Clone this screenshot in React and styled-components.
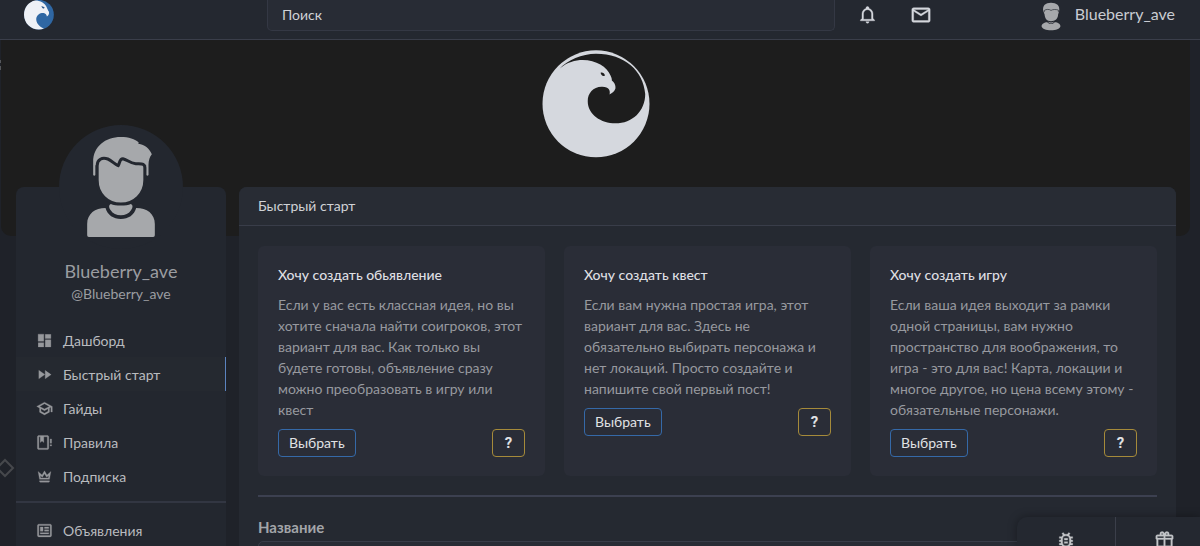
import styled, { createGlobalStyle, css } from 'styled-components';

const GlobalStyle = createGlobalStyle`
    * {
        box-sizing: border-box;
    }

    body {
        margin: 0;
        background-color: #1f2229;
        color: #d5d8de;
        font-family: Lato, 'Open Sans', sans-serif;
        font-size: 14px;
    }

    button, input {
        font: inherit;
        color: inherit;
    }
`

const icons = {
    bell: 'M10 21H14C14 22.1 13.1 23 12 23S10 22.1 10 21M21 19V20H3V19L5 17V11C5 7.9 7 5.2 10 4.3V4C10 2.9 10.9 2 12 2S14 2.9 14 4V4.3C17 5.2 19 7.9 19 11V17L21 19M17 11C17 8.2 14.8 6 12 6S7 8.2 7 11V18H17V11Z',
    mail: 'M22 6C22 4.9 21.1 4 20 4H4C2.9 4 2 4.9 2 6V18C2 19.1 2.9 20 4 20H20C21.1 20 22 19.1 22 18V6M20 6L12 11L4 6H20M20 18H4V8L12 13L20 8V18Z',
    dashboard: 'M13 3V9H21V3M13 21H21V11H13M3 21H11V15H3M3 13H11V3H3V13Z',
    forward: 'M13 6V18L21.5 12M4 18L12.5 12L4 6V18Z',
    school: 'M12 3L1 9L5 11.18V17.18L12 21L19 17.18V11.18L21 10.09V17H23V9L12 3M18.82 9L12 12.72L5.18 9L12 5.28L18.82 9M17 16L12 18.72L7 16V12.27L12 15L17 12.27V16Z',
    rules: 'M16 2H4C2.9 2 2 2.9 2 4V20C2 21.11 2.9 22 4 22H16C17.11 22 18 21.11 18 20V4C18 2.9 17.11 2 16 2M16 20H4V4H6V12L8.5 9.75L11 12V4H16V20M20 15H22V17H20V15M22 7V13H20V7H22Z',
    crown: 'M12 8L15 13.2L18 10.5L17.3 14H6.7L6 10.5L9 13.2L12 8M12 4L8.5 10L3 5L5 16H19L21 5L15.5 10L12 4M19 18H5V19C5 19.6 5.4 20 6 20H18C18.6 20 19 19.6 19 19V18Z',
    news: 'M20 5L20 19L4 19L4 5H20M20 3H4C2.89 3 2 3.89 2 5V19C2 20.11 2.89 21 4 21H20C21.11 21 22 20.11 22 19V5C22 3.89 21.11 3 20 3M18 15H6V17H18V15M10 7H6V13H10V7M12 9H18V7H12V9M18 11H12V13H18V11Z',
    bug: 'M20,8H17.19C16.74,7.2 16.12,6.5 15.37,6L17,4.41L15.59,3L13.42,5.17C12.96,5.06 12.49,5 12,5C11.51,5 11.04,5.06 10.59,5.17L8.41,3L7,4.41L8.62,6C7.87,6.5 7.26,7.21 6.81,8H4V10H6.09C6.03,10.33 6,10.66 6,11V12H4V14H6V15C6,15.34 6.03,15.67 6.09,16H4V18H6.81C8.47,20.87 12.14,21.84 15,20.18C15.91,19.66 16.67,18.9 17.19,18H20V16H17.91C17.97,15.67 18,15.34 18,15V14H20V12H18V11C18,10.66 17.97,10.33 17.91,10H20V8M16,15A4,4 0 0,1 12,19A4,4 0 0,1 8,15V11A4,4 0 0,1 12,7A4,4 0 0,1 16,11V15M14,10V12H10V10H14M10,14H14V16H10V14Z',
    gift: 'M22,12V20A2,2 0 0,1 20,22H4A2,2 0 0,1 2,20V12A1,1 0 0,1 1,11V8A2,2 0 0,1 3,6H6.17C6.06,5.69 6,5.35 6,5A3,3 0 0,1 9,2C10,2 10.88,2.5 11.43,3.24V3.23L12,4L12.57,3.23V3.24C13.12,2.5 14,2 15,2A3,3 0 0,1 18,5C18,5.35 17.94,5.69 17.83,6H21A2,2 0 0,1 23,8V11A1,1 0 0,1 22,12M4,20H11V12H4V20M20,20V12H13V20H20M9,4A1,1 0 0,0 8,5A1,1 0 0,0 9,6A1,1 0 0,0 10,5A1,1 0 0,0 9,4M15,4A1,1 0 0,0 14,5A1,1 0 0,0 15,6A1,1 0 0,0 16,5A1,1 0 0,0 15,4M3,8V10H11V8H3M13,8V10H21V8H13Z',
};

const Icon = ({ name, size = 17 }) => (
    <svg width={size} height={size} viewBox="0 0 24 24" fill="currentColor" stroke="currentColor" strokeWidth="0.4" aria-hidden="true">
        <path d={icons[name]} />
    </svg>
)

const Page = styled.div`
    position: relative;
    height: 100vh;
    overflow: hidden;
`

const Header = styled.header`
    display: grid;
    grid-template-columns: 243px minmax(0, 568px) 1fr auto;
    grid-template-rows: 29px;
    height: 40px;
    padding: 0 25px 0 24px;
    background-color: #242830;
    border-bottom: 1px solid #3a3e4a;
`

const LogoLink = styled.a`
    width: 30px;
    height: 30px;

    svg {
        display: block;
    }
`

const Search = styled.input`
    width: 100%;
    height: 31px;
    padding: 0 14px 2px;
    border: 1px solid #343844;
    border-top: none;
    border-radius: 0 0 5px 5px;
    outline: none;
    background-color: #282c35;
    font-size: 14px;

    &::placeholder {
        color: #d0d2d6;
        opacity: 1;
    }
`

const HeaderActions = styled.div`
    display: flex;
    align-items: center;
    gap: 33px;
    padding-left: 23px;
`

const IconButton = styled.button`
    display: flex;
    padding: 0;
    border: none;
    background: none;
    color: #d5d8de;
    cursor: pointer;
`

const UserLink = styled.a`
    display: flex;
    align-items: flex-start;
    gap: 14px;
    color: #c9ccd2;
    font-size: 16px;
    line-height: 28px;
    text-decoration: none;

    svg {
        margin-top: 2px;
    }
`

const Banner = styled.div`
    display: flex;
    justify-content: center;
    height: 196px;
    margin: 0 10px 0 1px;
    padding-top: 10px;
    border-radius: 0 0 10px 10px;
    background-color: #1d1d1d;
`

const Columns = styled.div`
    display: grid;
    grid-template-columns: 210px minmax(0, 1fr);
    gap: 13px;
    margin-top: -49px;
    padding: 0 24px 0 16px;
`

const Sidebar = styled.aside`
    border-radius: 8px 8px 0 0;
    background-color: #23272f;
`

const Profile = styled.div`
    display: flex;
    flex-direction: column;
    align-items: center;
    margin-top: -62px;
    color: #9b9da1;
`

const AvatarCircle = styled.div`
    display: flex;
    justify-content: center;
    width: 124px;
    height: 124px;
    padding-top: 12px;
    border-radius: 50%;
    background-color: #23272f;

    svg {
        flex: none;
    }
`

const Name = styled.div`
    margin-top: 11px;
    font-size: 18px;
    line-height: 22px;
`

const Nick = styled.div`
    margin-bottom: 17px;
    font-size: 14px;
    line-height: 24px;
`

const NavList = styled.nav`
    display: flex;
    flex-direction: column;
`

const NavItem = styled.a`
    display: flex;
    align-items: center;
    gap: 10px;
    height: 34px;
    padding-left: 20px;
    color: #b9bbbf;
    font-size: 14px;
    text-decoration: none;

    svg {
        color: #96989c;
    }

    ${props => props.$active && css`
        border-right: 1px solid #5b83bf;
        background-color: #252930;
    `}
`

const NavDivider = styled.hr`
    height: 2px;
    margin: 8px 0 10px;
    border: none;
    background-color: #323642;
`

const Panel = styled.main`
    min-height: 420px;
    border-radius: 8px 8px 0 0;
    background-color: #252931;
`

const PanelTitle = styled.h1`
    margin: 0;
    padding: 0 19px;
    border-bottom: 1px solid #393d49;
    border-radius: 8px 8px 0 0;
    background-color: #282c34;
    color: #d0d2d6;
    font-size: 14px;
    font-weight: 400;
    line-height: 38px;
`

const PanelBody = styled.div`
    padding: 20px 19px;
`

const Cards = styled.div`
    display: grid;
    grid-template-columns: repeat(3, minmax(0, 1fr));
    gap: 19px;
`

const Card = styled.section`
    padding: 18px 20px 19px;
    border-radius: 6px;
    background-color: #2a2d37;
`

const CardTitle = styled.h2`
    margin: 0 0 9px;
    color: #dedfe2;
    font-size: 14px;
    font-weight: 500;
    line-height: 21px;
`

const CardText = styled.p`
    margin: 0 0 9px;
    color: #97999f;
    font-size: 14px;
    line-height: 21px;
`

const CardActions = styled.div`
    display: flex;
    justify-content: space-between;
`

const Button = styled.button`
    height: 28px;
    padding: 0 10px 2px;
    border: 1px solid ${props => props.$help ? '#a58a3a' : '#3569a8'};
    border-radius: 4px;
    background: none;
    color: #e0e1e4;
    font-size: 14px;
    cursor: pointer;

    ${props => props.$help && css`
        width: 33px;
        padding-bottom: 0;
        font-family: Roboto, sans-serif;
        font-size: 15px;
        font-weight: 700;
    `}
`

const Separator = styled.hr`
    height: 2px;
    margin: 19px 0 20px;
    border: none;
    background-color: #3c4050;
`

const Field = styled.label`
    display: block;
    color: #a3a5a9;
    font-size: 15px;
    font-weight: 700;
    line-height: 20px;
`

const FieldInput = styled.input`
    display: block;
    width: 100%;
    height: 34px;
    margin-top: 4px;
    border: 1px solid #383c48;
    border-radius: 5px;
    outline: none;
    background-color: #282c35;
`

const Dock = styled.div`
    position: fixed;
    right: 0;
    bottom: 0;
    display: flex;
    width: 183px;
    height: 29px;
    border-radius: 10px 0 0 0;
    background-color: #242830;
    box-shadow: 0 0 10px rgba(0, 0, 0, 0.35);
    overflow: hidden;
`

const DockButton = styled.button`
    display: flex;
    flex: none;
    justify-content: center;
    width: 98px;
    padding: 13px 0 0;
    border: none;
    background: none;
    color: #c3c5c8;
    cursor: pointer;

    & + & {
        border-left: 1px solid #3b3f4a;
    }
`

const Ornament = styled.svg`
    position: absolute;
    left: 0;
    top: ${props => props.$top}px;
`

const Logo = () => (
    <svg width="30" height="30" viewBox="69 0 93 90" role="img" aria-label="Логотип">
        <circle cx="115.500" cy="44" r="46" fill="#2f67a3" />
        <path
            d="M104 0C84 3 69 22 69 44C69 70 90 90 115 90C121 90 126 89 131 87C115 81 106 69 107 56C109 44 119 38 130 39C136 40 139 44 140 50C146 46 148 40 146 34C143 31 142 26 139 20C133 8 120 0 104 0Z"
            fill="#eef1f6"
        />
        <path d="M123 17L133 21L131 25C127 25 124 22 123 17Z" fill="#2f5b8d" />
    </svg>
)

const BannerLogo = () => (
    <svg width="108" height="108" viewBox="66 27 324 327" aria-hidden="true">
        <circle cx="228" cy="190" r="162" fill="#d5d8de" />
        <path
            d="M118 83C140 64 165 57 188 57C228 57 262 78 272 104C275 110 276 114 276 119C283 124 288 132 287 143C285 152 277 157 269 162C272 150 268 139 247 138C220 137 203 157 203 182C203 222 243 249 287 249C338 249 377 212 377 160C372 90 315 38 228 38C185 38 142 58 118 83Z"
            fill="#1d1d1d"
        />
        <path d="M242 96C247 94 254 98 255 104C250 109 243 104 242 96Z" fill="#1d1d1d" />
    </svg>
)

const Avatar = () => (
    <svg width="68" height="100" viewBox="261 51 203 300" fill="#a6a8ab" aria-hidden="true">
        <path d="M279 165V125C279 80 315 51 362 51C385 51 405 57 416 68L414 71C435 74 448 86 455 103C449 110 445 122 445 135V165Q442 170 438 165V136H286V165Q282 170 279 165Z" />
        <path
            d="M291 165V137C291 118 306 111 323 117C335 122 344 133 354 137C359 131 357 116 368 116C381 119 389 130 407 131C424 132 434 129 434 143V180C434 222 402 252 362 252C322 252 291 222 291 180Z"
            stroke="#23272f"
            strokeWidth="9"
            strokeLinejoin="round"
        />
        <path d="M332 252C345 258 380 258 392 252C399 255 398 263 393 270C386 281 375 286 362 286C349 286 338 281 331 270C326 263 325 255 332 252Z" />
        <path d="M261 346V312C261 281 285 264 316 264C322 285 340 297 362 297C385 297 402 285 408 264C440 264 464 281 464 312V346Q464 351 459 351H266Q261 351 261 346Z" />
    </svg>
)

const SmallAvatar = () => (
    <svg width="20" height="29" viewBox="719 6 58 86" fill="#a6a8ab" aria-hidden="true">
        <path d="M725 33C722 16 732 8 748 8C764 8 776 16 772 34L769 43C769 55 760 63 748 63C736 63 730 55 729 43Z" />
        <path d="M728 36V31C734 27 743 27 748 31C754 27 764 28 770 30V36" fill="none" stroke="#242830" strokeWidth="2" />
        <path d="M720 78C720 71 728 66 737 66C742 73 754 73 759 66C769 66 776 71 776 78C774 86 763 90 748 90C733 90 722 86 720 78Z" />
        <path d="M739 64C744 68 752 68 757 64L755 67C751 71 745 71 741 67Z" />
    </svg>
)

const navItems = [
    { icon: 'dashboard', label: 'Дашборд' },
    { icon: 'forward', label: 'Быстрый старт', active: true },
    { icon: 'school', label: 'Гайды' },
    { icon: 'rules', label: 'Правила' },
    { icon: 'crown', label: 'Подписка' },
];

const cards = [
    {
        title: 'Хочу создать обьявление',
        text: 'Если у вас есть классная идея, но вы хотите сначала найти соигроков, этот вариант для вас. Как только вы будете готовы, объявление сразу можно преобразовать в игру или квест',
    },
    {
        title: 'Хочу создать квест',
        text: 'Если вам нужна простая игра, этот вариант для вас. Здесь не обязательно выбирать персонажа и нет локаций. Просто создайте и напишите свой первый пост!',
    },
    {
        title: 'Хочу создать игру',
        text: 'Если ваша идея выходит за рамки одной страницы, вам нужно пространство для воображения, то игра - это для вас! Карта, локации и многое другое, но цена всему этому - обязательные персонажи.',
    },
];

const App = () => {
    return (
        <Page>
            <GlobalStyle />
            <Header>
                <LogoLink href="#">
                    <Logo />
                </LogoLink>
                <Search type="text" placeholder="Поиск" aria-label="Поиск" />
                <HeaderActions>
                    <IconButton aria-label="Уведомления"><Icon name="bell" size={19} /></IconButton>
                    <IconButton aria-label="Сообщения"><Icon name="mail" size={22} /></IconButton>
                </HeaderActions>
                <UserLink href="#">
                    <SmallAvatar />
                    Blueberry_ave
                </UserLink>
            </Header>

            <Banner>
                <BannerLogo />
            </Banner>

            <Ornament $top={58} width="2" height="14" viewBox="0 0 2 14" fill="#55575b" aria-hidden="true">
                <path d="M0 2H1V5H0ZM0 8H1V12H0Z" />
            </Ornament>
            <Ornament $top={458} width="16" height="20" viewBox="0 0 16 20" fill="none" stroke="#46484c" strokeWidth="2" aria-hidden="true">
                <path d="M5 2L13 10L5 18L-3 10Z" />
            </Ornament>

            <Columns>
                <Sidebar>
                    <Profile>
                        <AvatarCircle>
                            <Avatar />
                        </AvatarCircle>
                        <Name>Blueberry_ave</Name>
                        <Nick>@Blueberry_ave</Nick>
                    </Profile>
                    <NavList>
                        {navItems.map(item => (
                            <NavItem key={item.label} href="#" $active={item.active}>
                                <Icon name={item.icon} />
                                {item.label}
                            </NavItem>
                        ))}
                    </NavList>
                    <NavDivider />
                    <NavList>
                        <NavItem href="#">
                            <Icon name="news" />
                            Объявления
                        </NavItem>
                    </NavList>
                </Sidebar>

                <Panel>
                    <PanelTitle>Быстрый старт</PanelTitle>
                    <PanelBody>
                        <Cards>
                            {cards.map(card => (
                                <Card key={card.title}>
                                    <CardTitle>{card.title}</CardTitle>
                                    <CardText>{card.text}</CardText>
                                    <CardActions>
                                        <Button>Выбрать</Button>
                                        <Button $help>?</Button>
                                    </CardActions>
                                </Card>
                            ))}
                        </Cards>
                        <Separator />
                        <Field>
                            Название
                            <FieldInput type="text" />
                        </Field>
                    </PanelBody>
                </Panel>
            </Columns>

            <Dock>
                <DockButton aria-label="Сообщить об ошибке"><Icon name="bug" size={20} /></DockButton>
                <DockButton aria-label="Подарки"><Icon name="gift" size={19} /></DockButton>
            </Dock>
        </Page>
    )
}

export default App;
